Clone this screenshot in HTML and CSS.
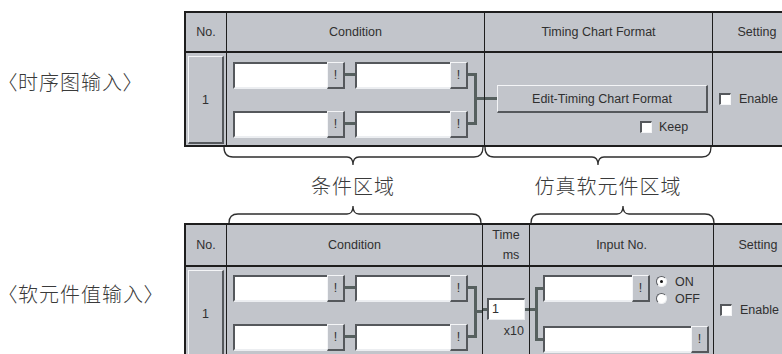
FILE: index.html
```html
<!DOCTYPE html>
<html>
<head>
	<meta charset='utf-8'/>
	<title>时序图输入 / 软元件值输入</title>
	<link rel="stylesheet" href="styles.css">
</head>
<body>

	<div class="section sec1">
		<div class="label"><span class="br">〈</span>时序图输入<span class="br">〉</span></div>

		<div class="grid grid1">
			<div class="hd">No.</div>
			<div class="hd">Condition</div>
			<div class="hd">Timing Chart Format</div>
			<div class="hd">Setting</div>

			<div class="cell no"><div class="nobtn">1</div></div>
			<div class="cell cond">
				<div class="pairs">
					<div class="pair">
						<div class="field f1"><span class="inp"></span><span class="bang">!</span></div>
						<span class="link"></span>
						<div class="field f2"><span class="inp"></span><span class="bang">!</span></div>
					</div>
					<div class="pair">
						<div class="field f1"><span class="inp"></span><span class="bang">!</span></div>
						<span class="link"></span>
						<div class="field f2"><span class="inp"></span><span class="bang">!</span></div>
					</div>
				</div>
				<span class="bracket"></span>
				<span class="stub"></span>
			</div>
			<div class="cell timing">
				<div class="edit-row">
					<span class="estub"></span>
					<div class="edit">Edit-Timing Chart Format</div>
				</div>
				<div class="keep"><span class="chk"></span>Keep</div>
			</div>
			<div class="cell setting"><span class="chk"></span>Enable</div>
		</div>
	</div>

	<div class="braces">
		<div class="brow brow-top">
			<svg class="brace" width="261" height="20" viewBox="0 0 261 20"><path d="M1,0 C1,7 4,10 10,10 H124 C128,10 130,12 130,18 C130,12 132,10 136,10 H251 C257,10 260,7 260,0"/></svg>
			<svg class="brace" width="228" height="20" viewBox="0 0 228 20"><path d="M1,0 C1,7 4,10 10,10 H108 C112,10 114,12 114,18 C114,12 116,10 120,10 H218 C224,10 227,7 227,0"/></svg>
		</div>
		<div class="brow brow-mid">
			<div class="area a1">条件区域</div>
			<div class="area a2">仿真软元件区域</div>
		</div>
		<div class="brow brow-bot">
			<svg class="brace" width="254" height="18" viewBox="0 0 254 18"><path d="M1,18 C1,12 4,9 10,9 H119 C123,9 125,7 125,1 C125,7 127,9 131,9 H244 C250,9 253,12 253,18"/></svg>
			<span class="gap48"></span>
			<svg class="brace" width="185" height="18" viewBox="0 0 185 18"><path d="M1,18 C1,12 4,9 10,9 H87 C91,9 93,7 93,1 C93,7 95,9 99,9 H175 C181,9 184,12 184,18"/></svg>
		</div>
	</div>

	<div class="section sec2">
		<div class="label"><span class="br">〈</span>软元件值输入<span class="br">〉</span></div>

		<div class="grid grid2">
			<div class="hd">No.</div>
			<div class="hd">Condition</div>
			<div class="hd time"><span>Time</span><span class="ms">ms</span></div>
			<div class="hd">Input No.</div>
			<div class="hd">Setting</div>

			<div class="cell no"><div class="nobtn">1</div></div>
			<div class="cell cond">
				<div class="pairs">
					<div class="pair">
						<div class="field f1"><span class="inp"></span><span class="bang">!</span></div>
						<span class="link"></span>
						<div class="field f2"><span class="inp"></span><span class="bang">!</span></div>
					</div>
					<div class="pair">
						<div class="field f1"><span class="inp"></span><span class="bang">!</span></div>
						<span class="link"></span>
						<div class="field f2"><span class="inp"></span><span class="bang">!</span></div>
					</div>
				</div>
				<span class="bracket"></span>
				<span class="stub"></span>
			</div>
			<div class="cell tcell">
				<div class="trow">
					<span class="tstub"></span>
					<span class="tin">1</span>
					<span class="tstub"></span>
				</div>
				<div class="x10">x10</div>
			</div>
			<div class="cell incell">
				<span class="istub"></span>
				<span class="ibr"></span>
				<div class="irows">
					<div class="irow">
						<div class="field f3"><span class="inp"></span><span class="bang">!</span></div>
						<div class="radios">
							<div class="radio"><span class="rb on"></span>ON</div>
							<div class="radio"><span class="rb"></span>OFF</div>
						</div>
					</div>
					<div class="irow">
						<div class="field f4"><span class="inp"></span><span class="bang">!</span></div>
					</div>
				</div>
			</div>
			<div class="cell setting"><span class="chk"></span>Enable</div>
		</div>
	</div>

</body>
</html>
```

FILE: styles.css
```css
*{
	margin:0;padding:0;
	box-sizing:border-box;
}
html,body{
	width:782px;
	height:354px;
	overflow:hidden;
	background:#fff;
}
body{
	font-family:"Liberation Sans",Arial,sans-serif;
	font-size:12.5px;
	color:#303030;
}

/* page sections */
.section{display:flex;}
.sec1{padding-top:11px;}
.label{
	width:184px;
	flex:none;
	padding:61px 0 0 7px;
	font-family:"Noto Sans CJK SC",sans-serif;
	font-weight:300;
	font-size:20px;
	line-height:20px;
	letter-spacing:1px;
	color:#3a3a3a;
	white-space:nowrap;
}
.label .br{font-feature-settings:"palt";}

/* tables */
.grid{
	display:grid;
	flex:none;
	background:#1e1e1e;
	border:2px solid #1e1e1e;
	column-gap:1px;
	row-gap:2px;
}
.grid1{
	grid-template-columns:40px 257px 227px 88px;
	grid-template-rows:38px 92px;
}
.grid2{
	grid-template-columns:40px 255px 46px 183px 88px;
	grid-template-rows:40px 92px;
}
.hd,.cell{background:#c2c5cb;}
.hd{
	display:flex;
	align-items:center;
	justify-content:center;
}
.hd.time{
	flex-direction:column;
	line-height:20px;
}
.hd.time .ms{padding-left:10px;}

/* No. button */
.no{padding:3px 2px 1px 2px;}
.nobtn{
	height:100%;
	display:flex;
	align-items:center;
	justify-content:center;
	border-style:solid;
	border-width:1px 2px 2px 1px;
	border-color:#f4f5f7 #55585c #55585c #f4f5f7;
}

/* inputs and ! buttons */
.field{display:flex;height:27px;flex:none;}
.f1{width:112px;}
.f2{width:113px;}
.f3{width:107px;}
.f4{width:166px;}
.inp{
	flex:1;
	background:#fff;
	border-style:solid;
	border-width:2px 0 2px 2px;
	border-color:#55585c #fff #eceef1 #55585c;
}
.bang{
	width:18px;
	flex:none;
	display:flex;
	align-items:center;
	justify-content:center;
	color:#333;
	border-style:solid;
	border-width:1px 2px 2px 1px;
	border-color:#f4f5f7 #55585c #55585c #f4f5f7;
}

/* condition column */
.cond{
	display:flex;
	align-items:flex-start;
	padding:9px 0 0 6px;
}
.pairs{display:flex;flex-direction:column;gap:22px;}
.grid2 .cond{padding-top:8px;}
.pair{display:flex;}
.link{
	width:10px;height:3px;
	margin-top:11px;
	background:#56605f;
}
.bracket{
	width:9px;height:52px;
	margin-top:11px;
	border:3px solid #56605f;
	border-left:none;
}
.stub{
	flex:1;height:3px;
	margin-top:35px;
	background:#56605f;
}

/* timing chart column */
.timing{padding-top:32px;}
.edit-row{display:flex;}
.estub{
	width:12px;height:3px;
	margin-top:12px;
	background:#56605f;
}
.edit{
	width:211px;height:28px;
	display:flex;
	align-items:center;
	justify-content:center;
	border-style:solid;
	border-width:1px 2px 2px 1px;
	border-color:#f4f5f7 #55585c #55585c #f4f5f7;
}
.keep{
	display:flex;
	align-items:center;
	gap:7px;
	margin:7px 0 0 155px;
	height:13px;
}
.chk{
	width:12px;height:12px;
	flex:none;
	background:#fff;
	border-style:solid;
	border-width:2px 1px 1px 2px;
	border-color:#55585c #f4f5f7 #f4f5f7 #55585c;
}

/* setting column */
.setting{
	display:flex;
	align-items:center;
	align-self:stretch;
	gap:8px;
	padding:0 0 0 6px;
}
.grid1 .setting{padding-bottom:1px;}
.grid2 .setting{padding-bottom:7px;}

/* time column */
.tcell{padding-top:31px;}
.trow{display:flex;}
.tstub{
	width:4px;height:3px;
	margin-top:10px;
	background:#56605f;
}
.tin{
	width:38px;height:22px;
	padding-left:3px;
	line-height:19px;
	background:#fff;
	border-style:solid;
	border-width:2px 1px 1px 2px;
	border-color:#55585c #eceef1 #eceef1 #55585c;
}
.x10{
	text-align:right;
	padding-right:5px;
	margin-top:4px;
	line-height:14px;
}

/* input no. column */
.incell{
	display:flex;
	align-items:flex-start;
	padding-top:8px;
}
.istub{
	width:5px;height:3px;
	margin-top:33px;
	background:#56605f;
}
.ibr{
	width:8px;height:54px;
	margin-top:12px;
	border:3px solid #56605f;
	border-right:none;
}
.irows{display:flex;flex-direction:column;gap:22px;}
.irow{display:flex;}
.radios{
	display:flex;
	flex-direction:column;
	gap:6px;
	margin:1px 0 0 6px;
}
.radio{
	display:flex;
	align-items:center;
	gap:8px;
	height:11px;
}
.rb{
	width:11px;height:11px;
	border-radius:50%;
	background:#fff;
	border:1px solid;
	border-color:#5a5d62 #eef0f2 #eef0f2 #5a5d62;
	display:flex;
	align-items:center;
	justify-content:center;
}
.rb.on::after{
	content:"";
	width:3px;height:3px;
	border-radius:50%;
	background:#111;
}

/* braces between the two tables */
.braces{height:76px;}
.brow{display:flex;}
.brow-top{height:20px;padding-left:223px;}
.brow-mid{height:38px;padding-left:223px;align-items:center;}
.brow-bot{height:18px;padding-left:228px;}
.brace{display:block;flex:none;}
.brace path{fill:none;stroke:#2e2e2e;stroke-width:1.3;}
.gap48{width:48px;flex:none;}
.area{
	font-family:"Noto Sans CJK SC",sans-serif;
	font-weight:300;
	font-size:20px;
	line-height:24px;
	letter-spacing:1px;
	color:#3a3a3a;
	text-align:center;
	white-space:nowrap;
}
.a1{width:260px;}
.a2{width:250px;}
```
